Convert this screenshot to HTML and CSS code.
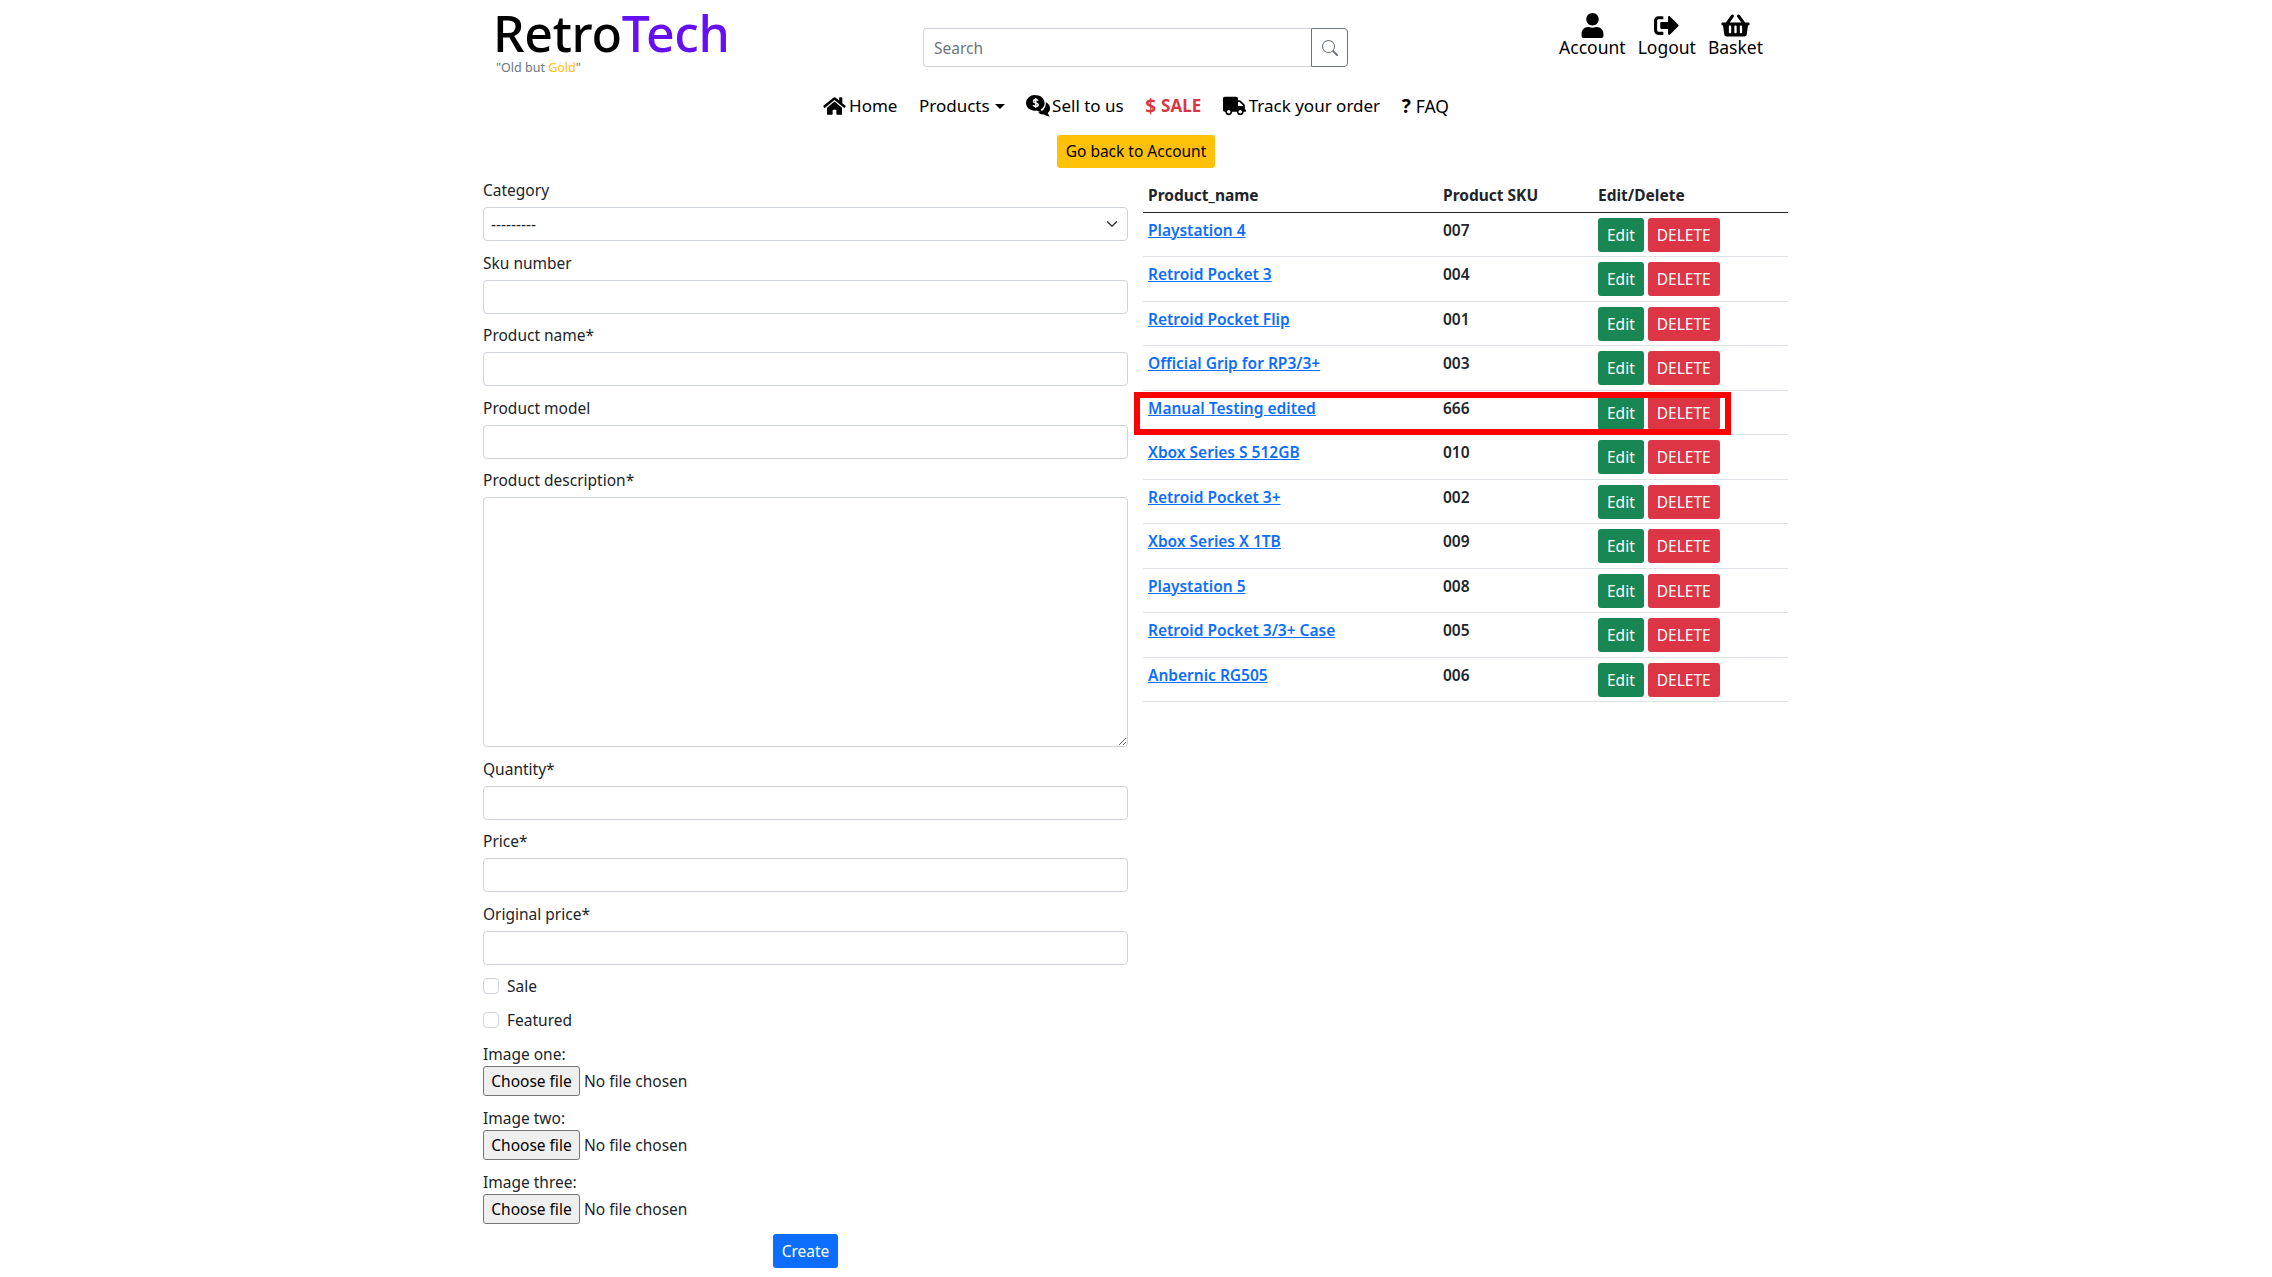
FILE: index.html
```html
<!DOCTYPE html>
<html lang="en">
<head>
    <meta charset="UTF-8">
    <meta name="viewport" content="width=device-width, initial-scale=1.0">
    <title>RetroTech</title>
    <link rel="stylesheet" href="styles.css">
</head>
<body>

    <header class="topbar">
        <div class="brand">
            <div class="logo">Retro<span class="logo-tech">Tech</span></div>
            <div class="tagline">"Old but <span class="tagline-gold">Gold</span>"</div>
        </div>
        <form class="search">
            <input class="search-input" type="text" placeholder="Search">
            <button class="search-btn" type="button" aria-label="Search">
                <svg class="icon-search" viewBox="0 0 16 16"><path d="M11.742 10.344a6.5 6.5 0 1 0-1.397 1.398h-.001c.03.04.062.078.098.115l3.85 3.85a1 1 0 0 0 1.415-1.414l-3.85-3.85a1.007 1.007 0 0 0-.115-.1zM12 6.5a5.5 5.5 0 1 1-11 0 5.5 5.5 0 0 1 11 0z"/></svg>
            </button>
        </form>
        <nav class="user-links">
            <a class="user-link" href="#">
                <svg class="icon-user" viewBox="0 0 448 512"><path d="M224 256c70.7 0 128-57.3 128-128S294.7 0 224 0 96 57.3 96 128s57.3 128 128 128zm89.6 32h-16.7c-22.2 10.2-46.9 16-72.9 16s-50.6-5.8-72.9-16h-16.7C60.2 288 0 348.2 0 422.4V464c0 26.5 21.5 48 48 48h352c26.5 0 48-21.5 48-48v-41.6c0-74.2-60.2-134.4-134.4-134.4z"/></svg>
                Account
            </a>
            <a class="user-link" href="#">
                <svg class="icon-user" viewBox="0 0 512 512"><path d="M497 273L329 441c-15 15-41 4.5-41-17v-96H152c-13.3 0-24-10.7-24-24v-96c0-13.3 10.7-24 24-24h136V88c0-21.4 25.9-32 41-17l168 168c9.3 9.4 9.3 24.6 0 34zM192 436v-40c0-6.6-5.4-12-12-12H96c-17.7 0-32-14.3-32-32V160c0-17.7 14.3-32 32-32h84c6.6 0 12-5.4 12-12V76c0-6.6-5.4-12-12-12H96c-53 0-96 43-96 96v192c0 53 43 96 96 96h84c6.6 0 12-5.4 12-12z"/></svg>
                Logout
            </a>
            <a class="user-link" href="#">
                <svg class="icon-user" viewBox="0 0 576 512"><path d="M576 216v16c0 13.255-10.745 24-24 24h-8l-26.113 182.788C514.509 462.435 494.257 480 470.37 480H105.63c-23.887 0-44.139-17.565-47.518-41.212L32 256h-8c-13.255 0-24-10.745-24-24v-16c0-13.255 10.745-24 24-24h67.341l106.78-146.821c10.395-14.292 30.407-17.453 44.701-7.058 14.293 10.395 17.453 30.408 7.058 44.701L170.477 192h235.046L326.12 82.821c-10.395-14.292-7.234-34.306 7.059-44.701 14.291-10.395 34.306-7.235 44.701 7.058L484.659 192H552c13.255 0 24 10.745 24 24zM312 392V280c0-13.255-10.745-24-24-24s-24 10.745-24 24v112c0 13.255 10.745 24 24 24s24-10.745 24-24zm112 0V280c0-13.255-10.745-24-24-24s-24 10.745-24 24v112c0 13.255 10.745 24 24 24s24-10.745 24-24zm-224 0V280c0-13.255-10.745-24-24-24s-24 10.745-24 24v112c0 13.255 10.745 24 24 24s24-10.745 24-24z"/></svg>
                Basket
            </a>
        </nav>
    </header>

    <nav class="main-nav">
        <a class="nav-item" href="#">
            <svg class="icon-nav" viewBox="0 0 576 512"><path d="M280.37 148.26L96 300.11V464a16 16 0 0 0 16 16l112.06-.29a16 16 0 0 0 15.92-16V368a16 16 0 0 1 16-16h64a16 16 0 0 1 16 16v95.64a16 16 0 0 0 16 16.05L464 480a16 16 0 0 0 16-16V300L295.67 148.26a12.19 12.19 0 0 0-15.3 0zM571.6 251.47L488 182.56V44.05a12 12 0 0 0-12-12h-56a12 12 0 0 0-12 12v72.61L318.47 43a48 48 0 0 0-61 0L4.34 251.47a12 12 0 0 0-1.6 16.9l25.5 31A12 12 0 0 0 45.15 301l235.22-193.74a12.19 12.19 0 0 1 15.3 0L530.9 301a12 12 0 0 0 16.9-1.6l25.5-31a12 12 0 0 0-1.7-16.93z"/></svg>
            Home
        </a>
        <a class="nav-item" href="#">Products<span class="caret"></span></a>
        <a class="nav-item" href="#">
            <svg class="icon-nav icon-sell" viewBox="0 0 24 20">
                <path d="M9 0a8 7.2 0 0 1 4.6 13.1c.4 1 1 1.8 1.7 2.5-1.9 0-3.8-.6-5.2-1.5A8 7.2 0 1 1 9 0z"/>
                <path d="M18.2 6.6a6.3 5.9 0 0 1 1.9 9.9c.3 1.2 1.1 2.3 2.1 3.2-2.2 0-4.3-.7-5.9-2a6.3 5.9 0 0 1-5.2-1.8c3.9-.4 7.7-4.300 7.100-9.300z"/>
                <path class="icon-cut" d="M11.200 5c-.5-.8-1.200-1.100-2.200-1.100-1.200 0-2.100.6-2.100 1.600 0 2.200 4.400 1.100 4.400 3.300 0 1-.9 1.600-2.300 1.600-1.100 0-1.900-.4-2.400-1.200M9 2.600v9"/>
            </svg>
            Sell to us
        </a>
        <a class="nav-item nav-sale" href="#"><span class="nav-glyph">$</span> SALE</a>
        <a class="nav-item" href="#">
            <svg class="icon-nav" viewBox="0 0 640 512"><path d="M624 352h-16V243.9c0-12.7-5.1-24.9-14.1-33.9L494 110.1c-9-9-21.2-14.1-33.9-14.1H416V48c0-26.5-21.5-48-48-48H48C21.5 0 0 21.5 0 48v320c0 26.5 21.5 48 48 48h16c0 53 43 96 96 96s96-43 96-96h128c0 53 43 96 96 96s96-43 96-96h48c8.8 0 16-7.2 16-16v-32c0-8.8-7.2-16-16-16zM160 464c-26.5 0-48-21.5-48-48s21.5-48 48-48 48 21.5 48 48-21.5 48-48 48zm320 0c-26.5 0-48-21.5-48-48s21.5-48 48-48 48 21.5 48 48-21.5 48-48 48zm80-208H416V144h44.1l99.9 99.9V256z"/></svg>
            Track your order
        </a>
        <a class="nav-item nav-faq" href="#"><span class="nav-glyph">?</span> FAQ</a>
    </nav>

    <div class="back-row">
        <a class="btn btn-warning" href="#">Go back to Account</a>
    </div>

    <main class="content">
        <form class="product-form">
            <label class="field-label" for="category">Category</label>
            <select class="field-input field-select" id="category"><option>---------</option></select>

            <label class="field-label" for="sku">Sku number</label>
            <input class="field-input" id="sku" type="text">

            <label class="field-label" for="name">Product name*</label>
            <input class="field-input" id="name" type="text">

            <label class="field-label" for="model">Product model</label>
            <input class="field-input" id="model" type="text">

            <label class="field-label" for="description">Product description*</label>
            <textarea class="field-input field-textarea" id="description"></textarea>

            <label class="field-label" for="quantity">Quantity*</label>
            <input class="field-input" id="quantity" type="text">

            <label class="field-label" for="price">Price*</label>
            <input class="field-input" id="price" type="text">

            <label class="field-label" for="original">Original price*</label>
            <input class="field-input" id="original" type="text">

            <label class="check-row"><input class="check-box" type="checkbox"> Sale</label>
            <label class="check-row"><input class="check-box" type="checkbox"> Featured</label>

            <div class="file-label">Image one:</div>
            <div class="file-row"><button class="file-btn" type="button">Choose file</button><span>No file chosen</span></div>
            <div class="file-label">Image two:</div>
            <div class="file-row"><button class="file-btn" type="button">Choose file</button><span>No file chosen</span></div>
            <div class="file-label">Image three:</div>
            <div class="file-row"><button class="file-btn" type="button">Choose file</button><span>No file chosen</span></div>

            <div class="form-submit"><button class="btn btn-primary" type="button">Create</button></div>
        </form>

        <section class="product-list">
            <table class="product-table">
                <thead>
                    <tr><th class="col-name">Product_name</th><th class="col-sku">Product SKU</th><th>Edit/Delete</th></tr>
                </thead>
                <tbody>
                    <tr><td><a href="#">Playstation 4</a></td><td>007</td><td><a class="btn btn-success" href="#">Edit</a> <a class="btn btn-danger" href="#">DELETE</a></td></tr>
                    <tr><td><a href="#">Retroid Pocket 3</a></td><td>004</td><td><a class="btn btn-success" href="#">Edit</a> <a class="btn btn-danger" href="#">DELETE</a></td></tr>
                    <tr><td><a href="#">Retroid Pocket Flip</a></td><td>001</td><td><a class="btn btn-success" href="#">Edit</a> <a class="btn btn-danger" href="#">DELETE</a></td></tr>
                    <tr><td><a href="#">Official Grip for RP3/3+</a></td><td>003</td><td><a class="btn btn-success" href="#">Edit</a> <a class="btn btn-danger" href="#">DELETE</a></td></tr>
                    <tr><td><a href="#">Manual Testing edited</a></td><td>666</td><td><a class="btn btn-success" href="#">Edit</a> <a class="btn btn-danger" href="#">DELETE</a></td></tr>
                    <tr><td><a href="#">Xbox Series S 512GB</a></td><td>010</td><td><a class="btn btn-success" href="#">Edit</a> <a class="btn btn-danger" href="#">DELETE</a></td></tr>
                    <tr><td><a href="#">Retroid Pocket 3+</a></td><td>002</td><td><a class="btn btn-success" href="#">Edit</a> <a class="btn btn-danger" href="#">DELETE</a></td></tr>
                    <tr><td><a href="#">Xbox Series X 1TB</a></td><td>009</td><td><a class="btn btn-success" href="#">Edit</a> <a class="btn btn-danger" href="#">DELETE</a></td></tr>
                    <tr><td><a href="#">Playstation 5</a></td><td>008</td><td><a class="btn btn-success" href="#">Edit</a> <a class="btn btn-danger" href="#">DELETE</a></td></tr>
                    <tr><td><a href="#">Retroid Pocket 3/3+ Case</a></td><td>005</td><td><a class="btn btn-success" href="#">Edit</a> <a class="btn btn-danger" href="#">DELETE</a></td></tr>
                    <tr><td><a href="#">Anbernic RG505</a></td><td>006</td><td><a class="btn btn-success" href="#">Edit</a> <a class="btn btn-danger" href="#">DELETE</a></td></tr>
                </tbody>
            </table>
            <div class="highlight-box"></div>
        </section>
    </main>

</body>
</html>
```

FILE: styles.css
```css
* { box-sizing: border-box; }
html, body { height: 100%; }
body { margin: 0; font-family: "Noto Sans", "Open Sans", sans-serif; font-size: 15.5px; line-height: 24px; color: #212529; background: #fff; overflow: hidden; }
a { color: inherit; text-decoration: none; }

/* top bar */
.topbar { width: 1306px; height: 85px; margin: 0 auto; display: flex; align-items: flex-start; }
.brand { width: 440px; padding: 5px 0 0 10px; }
.logo { font-size: 50px; line-height: 56px; font-weight: 500; color: #000; letter-spacing: -0.3px; }
.logo-tech { color: #6610f2; }
.tagline { padding-left: 3px; font-size: 12.5px; line-height: 14px; color: #6c757d; }
.tagline-gold { color: #ffc107; }

.search { display: flex; width: 425px; margin-top: 28px; }
.search-input { flex: 1; height: 39px; padding: 4px 10px; font: inherit; color: #212529; border: 1px solid #ced4da; border-right: 0; border-radius: 4px 0 0 4px; outline: 0; }
.search-input::placeholder { color: #6c757d; }
.search-btn { width: 37px; height: 39px; padding: 0; display: flex; align-items: center; justify-content: center; background: #fff; border: 1px solid #6c757d; border-radius: 0 4px 4px 0; }
.icon-search { width: 16px; height: 16px; fill: #6c757d; }

.user-links { margin-left: auto; margin-right: 26px; margin-top: 13px; display: flex; gap: 12px; font-size: 17.5px; }
.user-link { display: flex; flex-direction: column; align-items: center; color: #000; line-height: 18px; }
.icon-user { height: 25px; width: 29px; fill: #000; }

/* main nav */
.main-nav { height: 42px; font-size: 17px; display: flex; justify-content: center; align-items: center; gap: 21.5px; }
.nav-item { display: flex; align-items: center; gap: 3px; color: #000; }
.icon-nav { height: 20px; width: 23px; fill: #000; }
.icon-sell { height: 22px; width: 26px; margin-right: -3px; }
.icon-cut { fill: none; stroke: #fff; stroke-width: 1.4; }
.caret { width: 0; height: 0; margin-left: 2px; border-top: 5px solid #000; border-left: 5px solid transparent; border-right: 5px solid transparent; }
.nav-sale { color: #dc3545; font-weight: 700; }
.nav-glyph { margin-right: 2px; font-size: 19px; font-weight: 700; }
.nav-faq { font-size: 17.5px; }

/* buttons */
.btn { display: inline-block; padding: 4px 8px; line-height: 24px; border: 1px solid transparent; border-radius: 3px; font: inherit; color: #fff; text-decoration: none; }
.btn-warning { padding: 3px 8px 4px; background: #ffc107; color: #000; }
.btn-primary { background: #0d6efd; }
.btn-success { background: #198754; }
.btn-danger { background: #dc3545; }

.back-row { margin-top: 8px; text-align: center; height: 33px; }

/* layout */
.content { width: 1306px; margin: 10px auto 0; display: grid; grid-template-columns: 645px 645px; column-gap: 15px; align-items: start; }

/* form */
.field-label { display: block; height: 24px; margin-bottom: 5px; }
.field-input { display: block; width: 100%; height: 34px; margin-bottom: 9.5px; padding: 4px 8px; font: inherit; color: #212529; background: #fff; border: 1px solid #ced4da; border-radius: 4px; outline: 0; }
.field-select { appearance: none; padding-left: 7px; background-image: url("data:image/svg+xml,%3csvg xmlns='http://www.w3.org/2000/svg' viewBox='0 0 16 16'%3e%3cpath fill='none' stroke='%23343a40' stroke-linecap='round' stroke-linejoin='round' stroke-width='2' d='M2 5l6 6 6-6'/%3e%3c/svg%3e"); background-repeat: no-repeat; background-position: right 9px center; background-size: 12px 12px; }
.field-textarea { height: 250px; resize: vertical; }

.check-row { display: flex; align-items: center; gap: 8px; height: 24px; margin-bottom: 10px; }
.check-box { appearance: none; width: 16px; height: 16px; margin: 0; border: 1px solid #ced4da; border-radius: 4px; background: #fff; }

.file-label { height: 24px; }
.file-row { display: flex; align-items: center; gap: 4px; height: 30px; margin-bottom: 10px; }
.file-btn { width: 97px; height: 30px; padding: 0; font: inherit; color: #000; background: #efefef; border: 1px solid #767676; border-radius: 3px; }
.form-submit { text-align: center; }

/* product table */
.product-list { position: relative; margin-top: 1px; }
.product-table { width: 100%; border-collapse: collapse; table-layout: fixed; }
.product-table th { padding: 4px; height: 33px; text-align: left; font-weight: 700; color: #212529; border-bottom: 1px solid #212529; }
.product-table th:first-child { padding-left: 5px; }
.product-table td { height: 44.5px; padding: 5px 4px 4px; vertical-align: top; font-weight: 600; border-bottom: 1px solid #dee2e6; }
.product-table td:first-child { padding-left: 5px; }
.product-table td a:not(.btn) { color: #0d6efd; text-decoration: underline; }
.product-table .btn { font-weight: 400; }
.col-name { width: 296px; }
.col-sku { width: 155px; }

.highlight-box { position: absolute; left: -9px; top: 213px; width: 597px; height: 43px; border: 6px solid #f00; pointer-events: none; }
```
